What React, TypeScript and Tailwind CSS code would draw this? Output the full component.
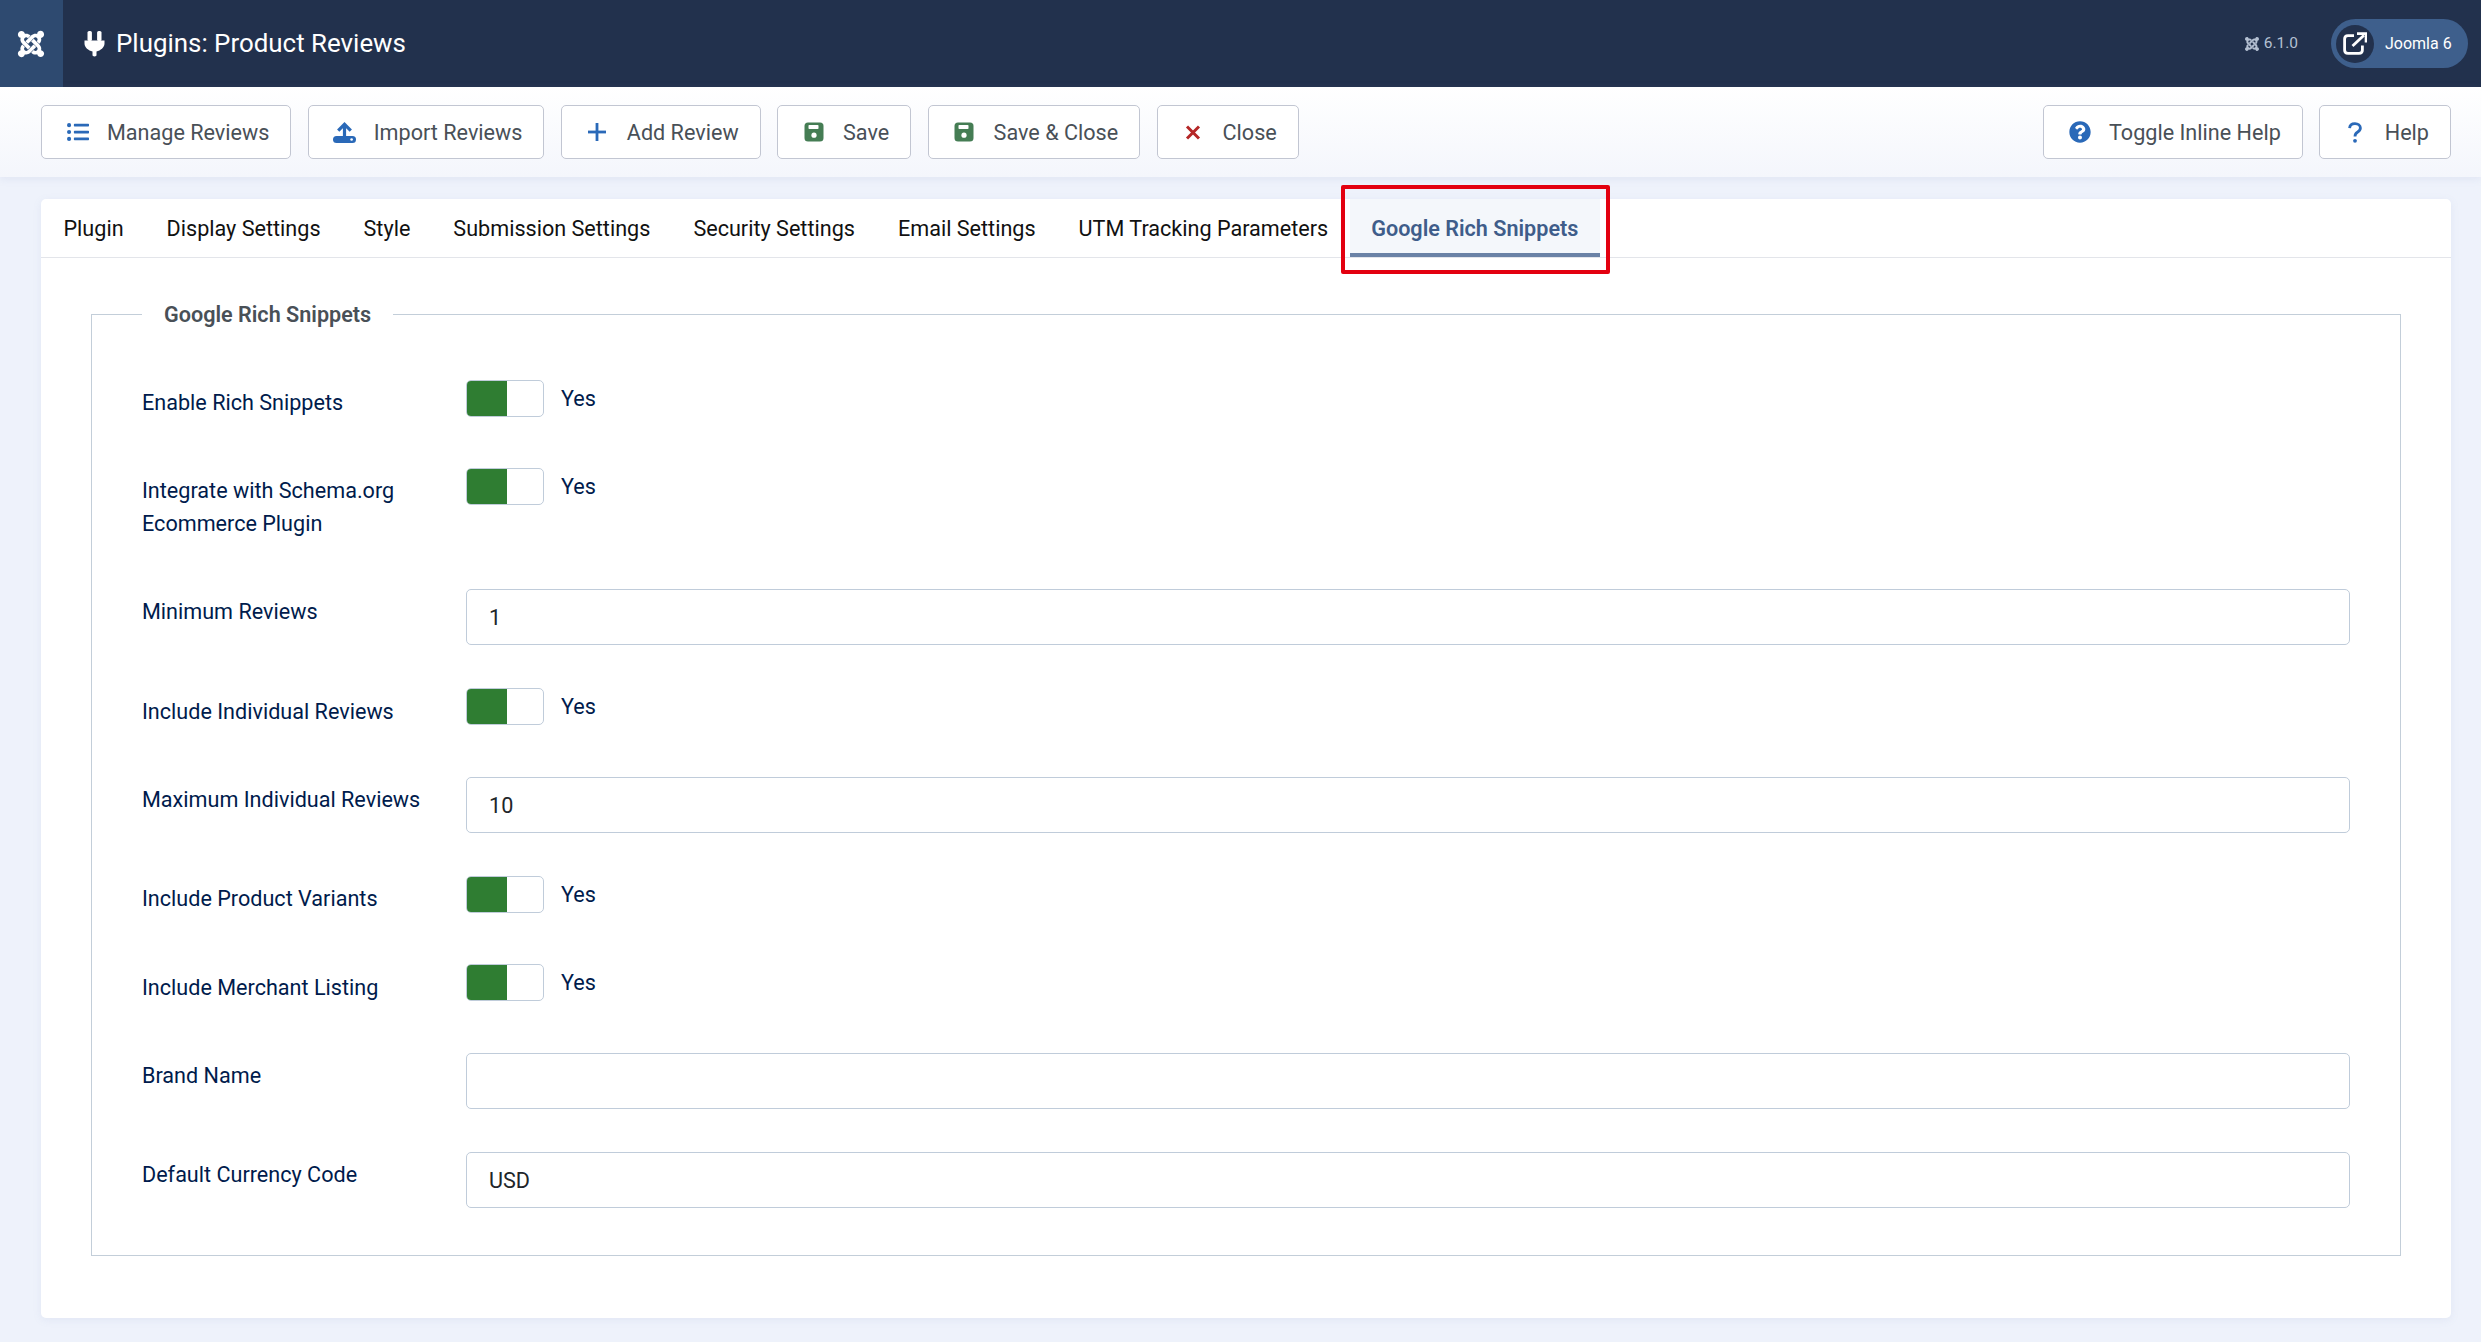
import type { ReactNode } from "react";
import { FaJoomla, FaListUl, FaQuestionCircle } from "react-icons/fa";

const TABS = ["Plugin", "Display Settings", "Style", "Submission Settings", "Security Settings", "Email Settings", "UTM Tracking Parameters"];

function PlugIcon() {
  return (
    <svg width="21" height="26" viewBox="0 0 20 26" fill="currentColor" className="ml-[21px] mr-[11px] text-white">
      <rect x="3" y="0" width="4.4" height="10" rx="1.6" />
      <rect x="12.6" y="0" width="4.4" height="10" rx="1.6" />
      <path d="M0 9.5H20V12.5C20 16.5 16 19.5 12 20.5V24.5Q10 26.5 8 24.5V20.5C4 19.5 0 16.5 0 12.5Z" />
    </svg>
  );
}

function UploadIcon() {
  return (
    <svg width="23" height="21" viewBox="0 0 23 21" className="text-[#2a69b8]">
      <rect x="0" y="14" width="23" height="7" rx="3.5" fill="currentColor" />
      <circle cx="18.6" cy="17.5" r="1.3" fill="white" />
      <path d="M11.5 16V3M5.2 8.6L11.5 2.3L17.8 8.6" fill="none" stroke="currentColor" strokeWidth="3.2" />
    </svg>
  );
}

function PlusIcon() {
  return (
    <svg width="18" height="18" viewBox="0 0 18 18" fill="currentColor" className="text-[#2a69b8]">
      <rect x="7.6" y="0" width="2.8" height="18" />
      <rect x="0" y="7.6" width="18" height="2.8" />
    </svg>
  );
}

function SaveIcon() {
  return (
    <svg width="20" height="20" viewBox="0 0 20 20" className="text-[#457d54]">
      <rect x="0.5" y="0.5" width="19" height="19" rx="3.5" fill="currentColor" />
      <rect x="4.5" y="3" width="10" height="4" rx="0.8" fill="white" />
      <circle cx="10" cy="13.2" r="2.6" fill="white" />
    </svg>
  );
}

function CloseIcon() {
  return (
    <svg width="16" height="15" viewBox="0 0 16 15" className="text-[#b52727]" stroke="currentColor" strokeWidth="3">
      <path d="M2 1.5L14 13.5M14 1.5L2 13.5" />
    </svg>
  );
}

function QuestionIcon() {
  return (
    <svg width="14" height="21" viewBox="0 0 14 21" fill="none" className="text-[#2a69b8]">
      <path d="M1.6 6.2C1.8 3.2 4 1.6 7 1.6C10 1.6 12.4 3.4 12.4 6C12.4 8.2 11 9.2 9.4 10.2C7.8 11.2 7 12 7 14.4" stroke="currentColor" strokeWidth="2.8" />
      <circle cx="7" cy="18.8" r="1.9" fill="currentColor" />
    </svg>
  );
}

function LinkOutIcon() {
  return (
    <svg width="24" height="23" viewBox="0 0 24 23" fill="none" stroke="white" strokeWidth="2.8">
      <path d="M11 3.6H5C3 3.6 1.6 5 1.6 7V18C1.6 20 3 21.4 5 21.4H16C18 21.4 19.4 20 19.4 18V13.5" />
      <path d="M9.5 14L21 3.2" />
      <path d="M14 1.6H23V10.4" strokeWidth="2.6" />
    </svg>
  );
}

function ToolbarButton({ icon, label }: { icon: ReactNode; label: string }) {
  return (
    <button className="flex h-[54px] items-center rounded-[5px] border border-[#c2c6d2] bg-white px-[21px] text-[21.6px] text-[#495057]">
      <span className="mr-[15px] flex w-[29px] items-center justify-center">{icon}</span>
      <span className="pt-[2px]">{label}</span>
    </button>
  );
}

function Toggle() {
  return (
    <div className="flex items-center">
      <div className="flex h-[37px] w-[78px] overflow-hidden rounded-[5px] border border-[#c0ccda] bg-white">
        <div className="h-full w-[40px] bg-[#2f7d32]" />
      </div>
      <span className="ml-[17px] pt-[1px] text-[21.6px] text-[#001b4c]">Yes</span>
    </div>
  );
}

function TextInput({ value }: { value: string }) {
  return (
    <div className="flex h-[56px] items-center rounded-[5px] border border-[#c0ccda] bg-white px-[22px] pt-[2px] text-[21.6px] text-[#212529]">
      {value}
    </div>
  );
}

function Row({ label, height, labelPad = "pt-[6px]", children }: { label: ReactNode; height: string; labelPad?: string; children: ReactNode }) {
  return (
    <div className={`flex ${height}`}>
      <div className={`w-[324px] text-[21.6px] leading-[33px] text-[#001b4c] ${labelPad}`}>{label}</div>
      <div className="flex-1">{children}</div>
    </div>
  );
}

export default function App() {
  return (
    <div className="h-[1342px] overflow-hidden bg-[#eef2fb] font-['Roboto',sans-serif]">
      <header className="flex h-[87px] items-center bg-[#22314d]">
        <div className="flex h-full w-[63px] items-center justify-center bg-[#2e4a70] pr-[1px] text-white">
          <FaJoomla size={30} />
        </div>
        <PlugIcon />
        <h1 className="text-[25.9px] text-white">Plugins: Product Reviews</h1>
        <div className="ml-auto flex items-center gap-[4px] text-[15.5px] text-[#b4c0d2]">
          <FaJoomla size={16} />
          6.1.0
        </div>
        <div className="ml-[33px] mr-[13px] flex h-[49px] w-[137px] items-center rounded-full bg-[#3e5f8c] pl-[5px] text-[16px] text-white">
          <span className="mr-[11px] flex h-[38px] w-[38px] items-center justify-center rounded-full bg-[#22314d]">
            <LinkOutIcon />
          </span>
          Joomla 6
        </div>
      </header>

      <div className="flex h-[90px] items-center justify-between bg-gradient-to-b from-white to-[#f4f6fc] pl-[41px] pr-[30px] shadow-[0_2px_8px_rgba(120,140,190,0.12)]">
        <div className="flex gap-[16.4px]">
          <ToolbarButton icon={<FaListUl size={22} className="text-[#2a69b8]" />} label="Manage Reviews" />
          <ToolbarButton icon={<UploadIcon />} label="Import Reviews" />
          <ToolbarButton icon={<PlusIcon />} label="Add Review" />
          <ToolbarButton icon={<SaveIcon />} label="Save" />
          <ToolbarButton icon={<SaveIcon />} label="Save & Close" />
          <ToolbarButton icon={<CloseIcon />} label="Close" />
        </div>
        <div className="flex gap-[16px]">
          <ToolbarButton icon={<FaQuestionCircle size={22} className="text-[#2a69b8]" />} label="Toggle Inline Help" />
          <ToolbarButton icon={<QuestionIcon />} label="Help" />
        </div>
      </div>

      <div className="pl-[41px] pr-[30px] pt-[22px]">
        <main className="h-[1119px] rounded-[5px] bg-white shadow-[0_2px_8px_rgba(120,140,190,0.1)]">
          <nav className="flex h-[59px] items-stretch border-b border-[#e3e5ea] pl-[1px] text-[21.6px] text-[#111]">
            {TABS.map((tab) => (
              <div key={tab} className="flex items-center px-[21.5px] pt-[2px]">
                {tab}
              </div>
            ))}
            <div className="relative flex items-center border-b-4 border-[#6a82a6] bg-[#f4f7fb] px-[21.5px] pt-[6px] font-semibold text-[#3f5d8a]">
              Google Rich Snippets
              <div className="absolute -left-[9px] -right-[10px] -top-[14px] -bottom-[21px] rounded-[2px] border-4 border-[#e3000f]" />
            </div>
          </nav>

          <div className="px-[50px] pt-[39px]">
            <fieldset className="h-[959px] border border-[#c3ced9] px-[50px]">
              <legend className="px-[22px] pt-[1px] text-[21.6px] leading-[33px] font-semibold text-[#495057]">Google Rich Snippets</legend>
              <div className="pt-[49px]">
                <Row label="Enable Rich Snippets" height="h-[88px]"><Toggle /></Row>
                <Row label={<>Integrate with Schema.org<br />Ecommerce Plugin</>} height="h-[121px]"><Toggle /></Row>
                <Row label="Minimum Reviews" height="h-[99px]"><TextInput value="1" /></Row>
                <Row label="Include Individual Reviews" height="h-[89px]" labelPad="pt-[7px]"><Toggle /></Row>
                <Row label="Maximum Individual Reviews" height="h-[99px]"><TextInput value="10" /></Row>
                <Row label="Include Product Variants" height="h-[88px]"><Toggle /></Row>
                <Row label="Include Merchant Listing" height="h-[89px]" labelPad="pt-[7px]"><Toggle /></Row>
                <Row label="Brand Name" height="h-[99px]"><TextInput value="" /></Row>
                <Row label="Default Currency Code" height="h-[56px]"><TextInput value="USD" /></Row>
              </div>
            </fieldset>
          </div>
        </main>
      </div>
    </div>
  );
}
